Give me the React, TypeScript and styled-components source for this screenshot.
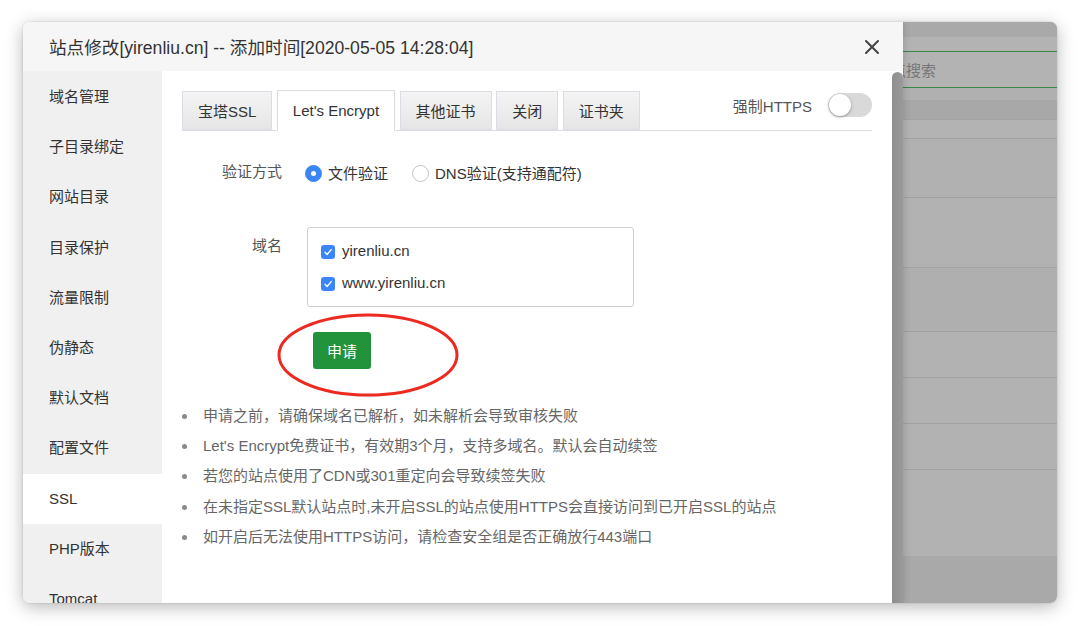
import React from "react";
import styled, { createGlobalStyle } from "styled-components";

const Global = createGlobalStyle`
  html, body { margin: 0; padding: 0; background: #ffffff; }
  body { font-family: "Liberation Sans", "Noto Sans CJK SC", sans-serif; }
  * { box-sizing: border-box; }
`;

const Stage = styled.div`
  width: 1080px;
  height: 626px;
  padding: 22px 23px 0 23px;
  background: #ffffff;
`;

const Window = styled.div`
  width: 1034px;
  height: 581px;
  display: flex;
  overflow: hidden;
  border-radius: 7px;
  box-shadow: 0 4px 18px rgba(0, 0, 0, 0.28), 0 0 2px rgba(0, 0, 0, 0.2);
`;

const Dialog = styled.div`
  width: 880px;
  flex: none;
  display: flex;
  flex-direction: column;
  background: #ffffff;
  position: relative;
  z-index: 2;
  box-shadow: 2px 0 6px rgba(0, 0, 0, 0.12);
`;

const Header = styled.div`
  height: 49px;
  flex: none;
  display: flex;
  align-items: center;
  justify-content: space-between;
  padding: 0 22px 0 26px;
  background: #f6f6f6;
  color: #333;
  font-size: 17.6px;
`;

const CloseBtn = styled.div`
  width: 18px;
  height: 18px;
  display: flex;
  align-items: center;
  justify-content: center;
`;

const Body = styled.div`
  flex: 1;
  display: flex;
  min-height: 0;
`;

const Sidebar = styled.div`
  width: 139px;
  flex: none;
  background: #f0f0f0;
  padding-top: 1px;
`;

const NavItem = styled.div<{ $active?: boolean }>`
  height: 50.2px;
  line-height: 50px;
  padding-left: 26px;
  font-size: 15px;
  color: #333;
  background: ${(p) => (p.$active ? "#ffffff" : "transparent")};
`;

const Content = styled.div`
  flex: 1;
  padding: 19px 20px 0 20px;
  background: #ffffff;
  position: relative;
`;

const Scrollbar = styled.div`
  width: 11px;
  flex: none;
  background: linear-gradient(90deg, #8e8e8e, #9a9a9a);
  border-radius: 6px 6px 0 0;
  margin-top: 1px;
`;

const TabBar = styled.div`
  display: flex;
  align-items: flex-end;
  height: 41px;
  border-bottom: 1px solid #dcdce4;
`;

const Tab = styled.div<{ $active?: boolean }>`
  height: ${(p) => (p.$active ? "41px" : "39px")};
  margin-bottom: ${(p) => (p.$active ? "-1px" : "0")};
  margin-right: 4.5px;
  padding: 0 15px;
  display: flex;
  align-items: center;
  font-size: 15px;
  color: #333;
  border: 1px solid #dcdce4;
  border-bottom-color: ${(p) => (p.$active ? "#ffffff" : "#dcdce4")};
  background: ${(p) =>
    p.$active ? "#ffffff" : "linear-gradient(#f4f4f4, #e6e6e6)"};
`;

const ForceGroup = styled.div`
  margin-left: auto;
  align-self: flex-start;
  height: 30px;
  display: flex;
  align-items: center;
  gap: 16px;
  font-size: 15px;
  color: #555;
`;

const Toggle = styled.div`
  width: 44px;
  height: 24px;
  border-radius: 12px;
  background: #d9d9d9;
  padding: 1px;
  display: flex;
`;

const Knob = styled.div`
  width: 22px;
  height: 22px;
  border-radius: 50%;
  background: #ffffff;
  box-shadow: 0 1px 3px rgba(0, 0, 0, 0.35);
`;

const FormRow = styled.div<{ $mt: number; $align?: string }>`
  display: flex;
  align-items: ${(p) => p.$align || "center"};
  margin-top: ${(p) => p.$mt}px;
  min-height: 30px;
`;

const Label = styled.div<{ $pt?: number }>`
  width: 100px;
  flex: none;
  text-align: right;
  font-size: 15px;
  color: #555;
  line-height: 20px;
  padding-top: ${(p) => p.$pt || 0}px;
`;

const Field = styled.div`
  margin-left: 23px;
  display: flex;
  align-items: center;
`;

const RadioOption = styled.div`
  display: flex;
  align-items: center;
  gap: 6px;
  margin-right: 24px;
  font-size: 15px;
  color: #333;
`;

const Radio = styled.span<{ $checked?: boolean }>`
  width: 17px;
  height: 17px;
  border-radius: 50%;
  margin-top: 3px;
  display: inline-flex;
  align-items: center;
  justify-content: center;
  background: ${(p) => (p.$checked ? "#3b86f7" : "#ffffff")};
  border: 1px solid ${(p) => (p.$checked ? "#3b86f7" : "#c4c4c4")};
  &::after {
    content: "";
    width: 5px;
    height: 5px;
    border-radius: 50%;
    background: ${(p) => (p.$checked ? "#ffffff" : "transparent")};
  }
`;

const DomainBox = styled.div`
  margin-left: 2px;
  width: 327px;
  height: 80px;
  border: 1px solid #cfcfcf;
  border-radius: 3px;
  padding: 6px 13px 5px 13px;
`;

const CheckRow = styled.div`
  height: 32px;
  display: flex;
  align-items: center;
  gap: 7px;
  font-size: 15px;
  color: #333;
`;

const CheckBox = styled.span`
  width: 14px;
  height: 14px;
  margin-top: 3px;
  border-radius: 3px;
  background: #3b86f7;
  display: inline-flex;
  align-items: center;
  justify-content: center;
`;

const ButtonRow = styled.div`
  margin-top: 25px;
  padding-left: 131px;
  display: flex;
`;

const ButtonWrap = styled.div`
  position: relative;
`;

const ApplyButton = styled.button`
  width: 58px;
  height: 37px;
  border: none;
  border-radius: 3px;
  background: #22933a;
  color: #ffffff;
  font-family: inherit;
  font-size: 15px;
  padding: 0;
`;

const Annotation = styled.svg`
  position: absolute;
  left: -37px;
  top: -20px;
  width: 184px;
  height: 86px;
  pointer-events: none;
  overflow: visible;
`;

const Tips = styled.ul`
  list-style: none;
  margin: 32px 0 0 0;
  padding: 0;
`;

const Tip = styled.li`
  position: relative;
  line-height: 30px;
  height: 30.2px;
  padding-left: 21px;
  font-size: 15px;
  color: #666;
  &::before {
    content: "";
    position: absolute;
    left: 0;
    top: 13px;
    width: 5px;
    height: 5px;
    border-radius: 50%;
    background: #8a8a8a;
  }
`;

const Backdrop = styled.div`
  flex: 1;
  display: flex;
  flex-direction: column;
  background: #a9a9a9;
  overflow: hidden;
`;

const BgRow = styled.div<{ $h: number; $bg: string; $line?: string }>`
  height: ${(p) => p.$h}px;
  flex: none;
  background: ${(p) => p.$bg};
  border-bottom: ${(p) => (p.$line ? `1px solid ${p.$line}` : "none")};
  display: flex;
  align-items: center;
  font-size: 15px;
  color: #777;
  white-space: nowrap;
`;

const SearchText = styled.span`
  margin-left: -12px;
`;

const navItems = [
  "域名管理",
  "子目录绑定",
  "网站目录",
  "目录保护",
  "流量限制",
  "伪静态",
  "默认文档",
  "配置文件",
  "SSL",
  "PHP版本",
  "Tomcat",
];

const tabs = ["宝塔SSL", "Let's Encrypt", "其他证书", "关闭", "证书夹"];

const tips = [
  "申请之前，请确保域名已解析，如未解析会导致审核失败",
  "Let's Encrypt免费证书，有效期3个月，支持多域名。默认会自动续签",
  "若您的站点使用了CDN或301重定向会导致续签失败",
  "在未指定SSL默认站点时,未开启SSL的站点使用HTTPS会直接访问到已开启SSL的站点",
  "如开启后无法使用HTTPS访问，请检查安全组是否正确放行443端口",
];

const GREEN = "#3d8746";
const LINE = "#a2a2a2";

const bgRows: { h: number; bg: string; line?: string; search?: boolean }[] = [
  { h: 15, bg: "#a9a9a9" },
  { h: 15, bg: "#b3b3b3", line: GREEN },
  { h: 36, bg: "#b3b3b3", line: GREEN, search: true },
  { h: 12, bg: "#b0b0b0" },
  { h: 20, bg: "#a8a8a8", line: LINE },
  { h: 19, bg: "#b3b3b3", line: LINE },
  { h: 59, bg: "#b1b1b1", line: LINE },
  { h: 70, bg: "#b2b2b2", line: LINE },
  { h: 64, bg: "#afafaf", line: LINE },
  { h: 46, bg: "#b2b2b2", line: LINE },
  { h: 46, bg: "#b2b2b2", line: LINE },
  { h: 46, bg: "#b2b2b2", line: LINE },
  { h: 86, bg: "#b2b2b2" },
];

const Check = () => (
  <svg width="10" height="10" viewBox="0 0 10 10">
    <path d="M2 5.2 L4.2 7.4 L8.2 2.6" fill="none" stroke="#fff" strokeWidth="1.4" strokeLinecap="round" strokeLinejoin="round" />
  </svg>
);

export default function App() {
  return (
    <>
      <Global />
      <Stage>
        <Window>
          <Dialog>
            <Header>
              <span>站点修改[yirenliu.cn] -- 添加时间[2020-05-05 14:28:04]</span>
              <CloseBtn>
                <svg width="16" height="16" viewBox="0 0 16 16">
                  <path d="M2 2 L14 14 M14 2 L2 14" stroke="#444" strokeWidth="2" strokeLinecap="round" />
                </svg>
              </CloseBtn>
            </Header>
            <Body>
              <Sidebar>
                {navItems.map((n) => (
                  <NavItem key={n} $active={n === "SSL"}>
                    {n}
                  </NavItem>
                ))}
              </Sidebar>
              <Content>
                <TabBar>
                  {tabs.map((t) => (
                    <Tab key={t} $active={t === "Let's Encrypt"}>
                      {t}
                    </Tab>
                  ))}
                  <ForceGroup>
                    <span>强制HTTPS</span>
                    <Toggle>
                      <Knob />
                    </Toggle>
                  </ForceGroup>
                </TabBar>

                <FormRow $mt={26}>
                  <Label>验证方式</Label>
                  <Field>
                    <RadioOption>
                      <Radio $checked />
                      <span>文件验证</span>
                    </RadioOption>
                    <RadioOption>
                      <Radio />
                      <span>DNS验证(支持通配符)</span>
                    </RadioOption>
                  </Field>
                </FormRow>

                <FormRow $mt={40} $align="flex-start">
                  <Label $pt={9}>域名</Label>
                  <Field>
                    <DomainBox>
                      <CheckRow>
                        <CheckBox>
                          <Check />
                        </CheckBox>
                        <span>yirenliu.cn</span>
                      </CheckRow>
                      <CheckRow>
                        <CheckBox>
                          <Check />
                        </CheckBox>
                        <span>www.yirenliu.cn</span>
                      </CheckRow>
                    </DomainBox>
                  </Field>
                </FormRow>

                <ButtonRow>
                  <ButtonWrap>
                    <ApplyButton>申请</ApplyButton>
                    <Annotation viewBox="0 0 184 86">
                      <ellipse cx="92" cy="43" rx="89" ry="40" fill="none" stroke="#ec2a1f" strokeWidth="3" />
                    </Annotation>
                  </ButtonWrap>
                </ButtonRow>

                <Tips>
                  {tips.map((t) => (
                    <Tip key={t}>{t}</Tip>
                  ))}
                </Tips>
              </Content>
              <Scrollbar />
            </Body>
          </Dialog>
          <Backdrop>
            {bgRows.map((r, i) => (
              <BgRow key={i} $h={r.h} $bg={r.bg} $line={r.line}>
                {r.search ? <SearchText>点搜索</SearchText> : null}
              </BgRow>
            ))}
          </Backdrop>
        </Window>
      </Stage>
    </>
  );
}
